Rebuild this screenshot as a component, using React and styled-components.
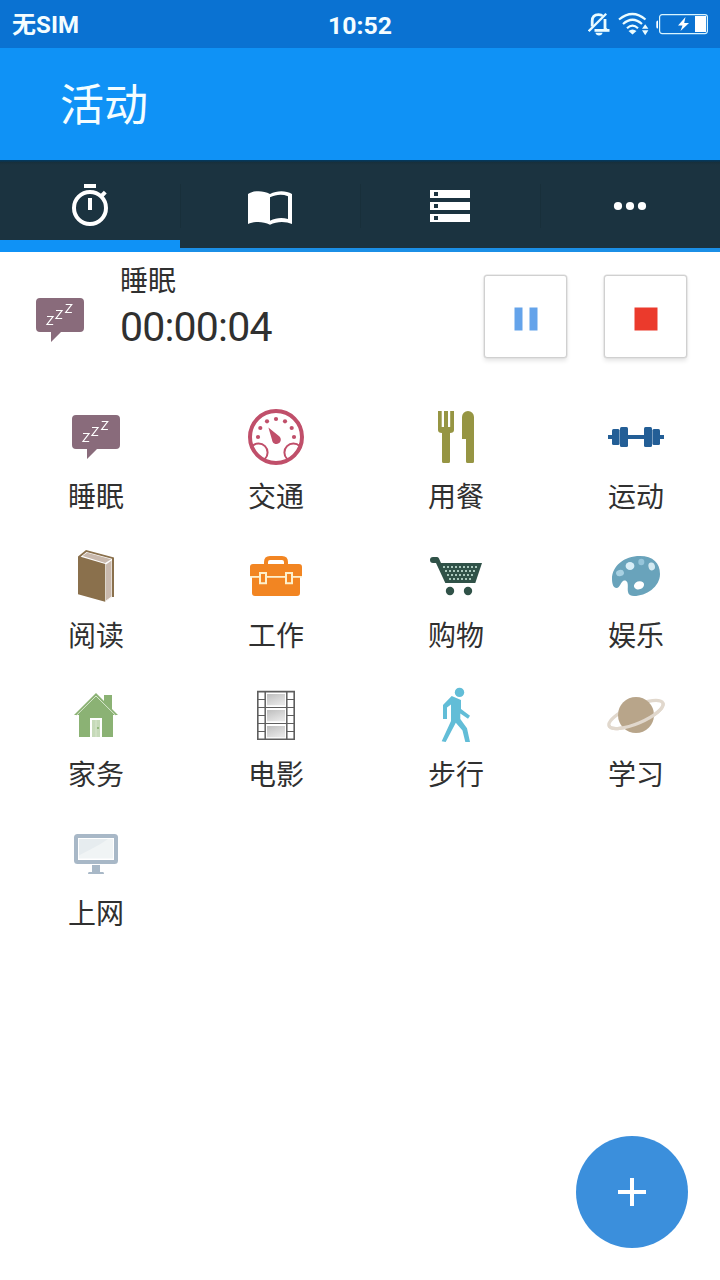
import React from 'react';
import styled, { createGlobalStyle } from 'styled-components';

const GlobalStyle = createGlobalStyle`
  * { box-sizing: border-box; }
  body {
    margin: 0;
    background: #fff;
    color: #303030;
    font-family: Roboto, "Noto Sans CJK SC", sans-serif;
  }
  button { font: inherit; color: inherit; border: 0; background: none; padding: 0; }
  svg { display: block; flex: none; }
`;

const Screen = styled.div`
  position: relative;
  width: 720px;
  height: 1280px;
  display: flex;
  flex-direction: column;
  overflow: hidden;
  background: #fff;
`;

const StatusBar = styled.div`
  height: 48px;
  flex: none;
  display: grid;
  grid-template-columns: 1fr auto 1fr;
  align-items: center;
  padding: 4px 12px 0 12px;
  background: #0a72d2;
  color: #f4fdff;
  font-size: 24.8px;
  font-weight: 700;
  line-height: 36px;
`;

const Carrier = styled.span`
  font-size: 24px;
  font-weight: 700;
  letter-spacing: 0.1px;
  padding-bottom: 2px;
`;

const StatusIcons = styled.div`
  display: flex;
  justify-content: flex-end;
  align-items: center;
  gap: 6px;
  padding-bottom: 4px;
`;

const AppBar = styled.header`
  height: 112px;
  flex: none;
  display: flex;
  align-items: center;
  padding: 4px 60px 0;
  background: #0f92f6;
  color: #f4fdff;
`;

const Title = styled.h1`
  margin: 0;
  font-size: 44px;
  font-weight: 400;
  line-height: 64px;
`;

const TabBar = styled.nav`
  height: 92px;
  flex: none;
  display: grid;
  grid-template-columns: repeat(4, 180px);
  background: #1b3340;
  background-image: linear-gradient(#04385c 0 1px, #172f3b 2px, #1b3340 5px);
`;

const Tab = styled.button`
  display: flex;
  justify-content: center;
  align-items: center;
  color: #fff;
  border-bottom: ${({ $active }) => ($active ? '12px solid #0f92f6' : '4px solid #1b8fe6')};
  padding-top: ${({ $active }) => ($active ? '12px' : '4px')};
  background: ${({ $divided }) =>
    $divided ? 'linear-gradient(#182f3a, #182f3a) 0 24px / 1px 44px no-repeat' : 'none'};
`;

const Timer = styled.section`
  height: 128px;
  flex: none;
  display: flex;
  align-items: flex-start;
  padding: 10px 33px 0 30px;
`;

const TimerIcon = styled.div`
  width: 90px;
  padding-top: 28px;
`;

const TimerText = styled.div`
  flex: 1;
  display: flex;
  flex-direction: column;
`;

const TimerName = styled.span`
  font-size: 28px;
  line-height: 40px;
`;

const TimerValue = styled.span`
  font-size: 41px;
  line-height: 50px;
  letter-spacing: -0.8px;
`;

const TimerActions = styled.div`
  display: flex;
  gap: 37px;
  padding-top: 13px;
`;

const ActionButton = styled.button`
  width: 83px;
  height: 83px;
  display: flex;
  align-items: center;
  justify-content: center;
  padding: 4px 0 0 1px;
  background: #fff;
  border: 1.5px solid #d0d0d0;
  border-radius: 3px;
  box-shadow: 0 0 0 0.5px #dcdcdc, 0 3px 4px rgba(0, 0, 0, 0.1);
`;

const ActivityGrid = styled.main`
  display: grid;
  grid-template-columns: repeat(4, 180px);
  grid-auto-rows: 139px;
  padding-top: 27px;
`;

const Activity = styled.button`
  display: flex;
  flex-direction: column;
  align-items: center;
  gap: 11px;
  padding-left: 12px;
`;

const ActivityLabel = styled.span`
  font-size: 28px;
  line-height: 40px;
  margin-bottom: -1px;
`;

const AddButton = styled.button`
  position: absolute;
  right: 32px;
  bottom: 32px;
  width: 112px;
  height: 112px;
  border-radius: 50%;
  display: flex;
  align-items: center;
  justify-content: center;
  background: #3b8fdc;
`;

const Icon = ({ children, size = 60, ...rest }) => (
  <svg width={size} height={size} viewBox={`0 0 ${size} ${size}`} {...rest}>
    {children}
  </svg>
);

const SleepIcon = () => (
  <Icon>
    <path fill="#896b7b" d="M10 8H50a4 4 0 0 1 4 4V38a4 4 0 0 1-4 4H31L21 52V42H10a4 4 0 0 1-4-4V12a4 4 0 0 1 4-4Z" />
    <g fill="none" stroke="#fff" strokeWidth="1.2">
      <path d="M17 26.500h6l-6 8h6.200" />
      <path d="M26 20.500h6l-6 8h6.200" />
      <path d="M35.700 14.500h6l-6 8h6.200" />
    </g>
  </Icon>
);

const gaugeDots = [[12, 30], [14.3, 21], [21, 14.3], [30, 12], [39, 14.3], [45.7, 21], [48, 30]];

const TrafficIcon = () => (
  <Icon>
    <clipPath id="dial"><circle cx="30" cy="30" r="26" /></clipPath>
    <g fill="none" stroke="#c04f6a" strokeWidth="2" clipPath="url(#dial)">
      <circle cx="12.6" cy="45.5" r="9" />
      <circle cx="47.4" cy="45.5" r="9" />
    </g>
    <circle cx="30" cy="30" r="26" fill="none" stroke="#c04f6a" strokeWidth="4" />
    {gaugeDots.map(([x, y]) => <circle key={x} cx={x} cy={y} r="2.1" fill="#c04f6a" />)}
    <path fill="#c04f6a" d="M22.400 20.600 32.600 28.800a4.400 4.400 0 1 1-6.600 4Z" />
  </Icon>
);

const DiningIcon = () => (
  <Icon fill="#969543">
    <path d="M12 4h3.700v16H18V4h4v16h2.200V4H28v19q0 3-4 3v28.500q0 1.500-1.500 1.500h-5q-1.500 0-1.500-1.500V26q-4 0-4-3Z" />
    <path d="M36 10a6 6 0 0 1 12 0v44.500q0 1.500-1.500 1.500h-5q-1.500 0-1.500-1.500V32h-4Z" />
  </Icon>
);

const SportIcon = () => (
  <Icon fill="#235e96">
    <path d="M2 28h5v4H2zM21 28h18v4H21zM53 28h5v4h-5z" />
    <rect x="6" y="22" width="7.600" height="16" rx="1.500" />
    <rect x="14" y="20" width="8" height="20" rx="1.500" />
    <rect x="38" y="20" width="8" height="20" rx="1.500" />
    <rect x="46.400" y="22" width="7.600" height="16" rx="1.500" />
  </Icon>
);

const ReadingIcon = () => (
  <Icon>
    <path fill="#8a704c" d="M12 10.500 20 4 48 11.500V51H46L39 55.700 12 48.300Z" />
    <path fill="#fff" d="M14.600 10.800 20.500 6 46 12.800V51.500L39.300 56V18Z" />
    <path fill="#c9b9ad" d="M16.500 10 21 6.700 45.300 13.200 39.200 16.900Z" />
    <path fill="#c9b9ad" d="M40 18.400 45.500 14.600V50.600L40 54.400Z" />
  </Icon>
);

const WorkIcon = () => (
  <Icon>
    <path fill="none" stroke="#f28522" strokeWidth="4" d="M20 19v-3q0-4 4-4h12q4 0 4 4v3" />
    <path fill="#f28522" d="M7 18H53q3 0 3 3V30H4V21q0-3 3-3ZM6 31.500H54V47q0 3-3 3H9q-3 0-3-3Z" />
    <path fill="#fdebbd" d="M4 30.200H56v1.300H4z" />
    <g fill="#f28522" stroke="#fdf0cc" strokeWidth="2">
      <path d="M14 27h6v10.300h-6zM40 27h6v10.300h-6z" />
    </g>
  </Icon>
);

const basketRows = [[18, 21, 9], [20, 25, 8], [22, 29, 7], [24, 33, 6]];

const ShoppingIcon = () => (
  <Icon fill="#305248">
    <path d="M7 11H11.200Q12.500 11 13 12.500L15 17H56L49.300 37H19.300L10 17H7A3 3 0 0 1 7 11Z" />
    <circle cx="24" cy="45" r="4.200" />
    <circle cx="42" cy="45" r="4.200" />
    <g fill="#a9c8bc">
      {basketRows.flatMap(([x, y, n]) =>
        Array.from({ length: n }, (_, i) => (
          <rect key={`${y}-${i}`} x={x - 1 + i * 4} y={y - 1} width="2" height="2" />
        ))
      )}
    </g>
  </Icon>
);

const LeisureIcon = () => (
  <Icon>
    <path
      fill="#69a3bb"
      d="M10.500 42C7.500 42 6 38 6 33 6 20 18 10 34 10 47 10 54 17 54 28 54 41 40 50 28 50 22 50 21.500 46 21.800 41 22.200 36 20.500 34 18 34.500 15 35 14 42 10.500 42Z"
    />
    <ellipse cx="14" cy="27" rx="4" ry="3.200" fill="#a8d1e2" transform="rotate(-15 14 27)" />
    <ellipse cx="24" cy="20" rx="4.400" ry="4" fill="#d9eef7" />
    <ellipse cx="35.300" cy="16" rx="3" ry="3.200" fill="#96c5da" />
    <ellipse cx="45.700" cy="20.400" rx="3.200" ry="4" fill="#d3e9f1" transform="rotate(-15 45.700 20.400)" />
    <ellipse cx="33" cy="39.300" rx="5.200" ry="4" fill="#fff" transform="rotate(-20 33 39.300)" />
  </Icon>
);

const HouseIcon = () => (
  <Icon>
    <path fill="#8bb274" d="M30 8 38 16V10H46V24L52 30H47V52H13V30H8Z" />
    <path fill="none" stroke="#d9e8cf" strokeWidth="1" d="M10.500 30.300 30 11 49.500 30.300" />
    <path fill="#fff" d="M24 33H36V52H24Z" />
    <path fill="#c6dab9" d="M26 35h8v17h-8z" />
    <path fill="#d7e5cd" d="M29.500 35h1v17h-1z" />
    <circle cx="32" cy="43" r="1.100" fill="#87b06f" />
  </Icon>
);

const MovieIcon = () => (
  <Icon>
    <linearGradient id="frame" x1="0" y1="0" x2="0.6" y2="1">
      <stop offset="0" stopColor="#bebebe" />
      <stop offset="1" stopColor="#e6e6e6" />
    </linearGradient>
    <g fill="none" stroke="#5e5e5e">
      <path strokeWidth="1.600" d="M11.800 6.600H48.200V54.200H11.800Z" />
      <path strokeWidth="1.500" d="M19.200 6V55M40.800 6V55" />
      <path strokeWidth="1" d="M11 22.500H49M11 38.500H49" />
      <path strokeWidth="1" d="M11 14.500h8M11 30.500h8M11 46.500h8M41 14.500h8M41 30.500h8M41 46.500h8" />
    </g>
    <g fill="url(#frame)">
      <rect x="21" y="9" width="18" height="11.300" />
      <rect x="21" y="25" width="18" height="11.300" />
      <rect x="21" y="41" width="18" height="11.300" />
    </g>
  </Icon>
);

const WalkIcon = () => (
  <Icon fill="#62bdd7">
    <circle cx="33.500" cy="7.400" r="4.700" />
    <path d="M25.700 11 35 15V24L44 30.700 42 33.700 34.300 28.500V34L41 43.300 44 57H39.300L36.500 45.500 29.800 37.700 19.700 57 15.700 56.300 25 36V19.500L21 22.500V34H17V20Z" />
  </Icon>
);

const StudyIcon = () => (
  <Icon>
    <ellipse cx="30" cy="29.500" rx="29.200" ry="9" fill="none" stroke="#e1d8cd" strokeWidth="3.300" transform="rotate(-23 30 29.500)" />
    <circle cx="30" cy="30" r="18" fill="#b8a58a" />
    <path
      d="M.8 29.500A29.200 9 0 0 0 59.200 29.500"
      fill="none" stroke="#e1d8cd" strokeWidth="3.300" transform="rotate(-23 30 29.500)"
    />
  </Icon>
);

const InternetIcon = () => (
  <Icon>
    <rect x="8" y="10" width="44" height="30" rx="3.500" fill="#a8b8c7" />
    <path fill="#fff" d="M12 14H48V36H12z" />
    <path fill="#f0f4f5" d="M13 15H47V34.500H13z" />
    <path fill="#e6ecef" d="M13 15H42Q35 20 29 23T13 31.500Z" />
    <path fill="#a8b8c7" d="M26 41h8v7h3q1 0 1 2H22q0-2 1-2h3Z" />
  </Icon>
);

const StopwatchIcon = () => (
  <Icon size={48} fill="none" stroke="currentColor" strokeWidth="4">
    <path d="M18 4H30M24 16V28" />
    <path d="M34.500 15 39.300 10.200" />
    <circle cx="24" cy="26" r="16" />
  </Icon>
);

const BookIcon = () => (
  <Icon size={48} fill="currentColor">
    <path
      fillRule="evenodd"
      d="M2 12C8 8.200 17 8.200 24 12 31 8.200 40 8.200 46 12V42C40 39.200 31 39 24 42.800 17 39 8 39.200 2 42ZM24 15.300V38.800C30 35.800 36 35.500 42 37V14.300C36 11.800 30 12.500 24 15.300Z"
    />
  </Icon>
);

const ListIcon = () => (
  <Icon size={48} fill="currentColor">
    <path fillRule="evenodd" d="M4 8H44v8H4zM8 10v4h4v-4zM4 20H44v8H4zM8 22v4h4v-4zM4 32H44v8H4zM8 34v4h4v-4z" />
  </Icon>
);

const MoreIcon = () => (
  <Icon size={48} fill="currentColor">
    <circle cx="12" cy="24" r="4.100" />
    <circle cx="24" cy="24" r="4.100" />
    <circle cx="36" cy="24" r="4.100" />
  </Icon>
);

const MutedIcon = () => (
  <svg width="24" height="24" viewBox="0 0 24 24" fill="none" stroke="#eafcff" strokeWidth="2.800">
    <path d="M4.200 14.500V9Q4.200 2.600 10.500 2.600 13.500 2.600 14.500 4M17 7V16.500L19 18.500" />
    <path d="M6.500 18.400H21.500" />
    <path strokeWidth="2.300" d="M.7 19.300 18.200 1.800" />
    <path fill="#eafcff" stroke="none" d="M7.500 20.800h7Q14 23.500 11 23.500T7.500 20.800Z" />
  </svg>
);

const WifiIcon = () => (
  <svg width="32" height="24" viewBox="0 0 32 24" fill="none" stroke="#eafcff" strokeWidth="2.200">
    <path d="M1 7.500Q14.500-3.500 27.500 7.500M5 12Q14.500 3.500 24 12M9 16.200Q14.500 11.200 20 16.200" />
    <path fill="#eafcff" stroke="none" d="M10.500 19Q14.500 16 18.500 19L14.500 22.500ZM24 16.700 27.200 12.300 30.400 16.700ZM24 18.300H30.400L27.200 23.300Z" />
  </svg>
);

const BatteryIcon = () => (
  <svg width="52" height="24" viewBox="0 0 52 24" fill="#fff">
    <rect x="3.600" y="2.600" width="47.800" height="19" rx="2.500" fill="none" stroke="#d9f5ff" strokeWidth="1.200" />
    <path d="M2 8.500Q.3 8.500.3 10v5q0 1.500 1.700 1.500Z" />
    <path d="M39 4h11v16H39zM29.500 5 22 13.500H26.500L24.500 19 33 11H28.200Z" />
  </svg>
);

const PauseIcon = () => (
  <Icon size={24} fill="#64a3ea">
    <path d="M.5.5h8v23h-8zM15.500.5h8v23h-8z" />
  </Icon>
);

const StopIcon = () => (
  <Icon size={24}>
    <rect x=".5" y=".5" width="23" height="23" fill="#eb3a2c" />
  </Icon>
);

const PlusIcon = () => (
  <Icon size={28} stroke="#fff" strokeWidth="4">
    <path d="M14 0V28M0 14H28" />
  </Icon>
);

const tabs = [
  { name: 'timer', Glyph: StopwatchIcon },
  { name: 'journal', Glyph: BookIcon },
  { name: 'list', Glyph: ListIcon },
  { name: 'more', Glyph: MoreIcon },
];

const activities = [
  ['睡眠', SleepIcon],
  ['交通', TrafficIcon],
  ['用餐', DiningIcon],
  ['运动', SportIcon],
  ['阅读', ReadingIcon],
  ['工作', WorkIcon],
  ['购物', ShoppingIcon],
  ['娱乐', LeisureIcon],
  ['家务', HouseIcon],
  ['电影', MovieIcon],
  ['步行', WalkIcon],
  ['学习', StudyIcon],
  ['上网', InternetIcon],
];

export default function App() {
  return (
    <Screen>
      <GlobalStyle />
      <StatusBar>
        <Carrier>无SIM</Carrier>
        <span>10:52</span>
        <StatusIcons>
          <MutedIcon />
          <WifiIcon />
          <BatteryIcon />
        </StatusIcons>
      </StatusBar>
      <AppBar>
        <Title>活动</Title>
      </AppBar>
      <TabBar>
        {tabs.map(({ name, Glyph }, i) => (
          <Tab key={name} $active={i === 0} $divided={i > 0}>
            <Glyph />
          </Tab>
        ))}
      </TabBar>
      <Timer>
        <TimerIcon><SleepIcon /></TimerIcon>
        <TimerText>
          <TimerName>睡眠</TimerName>
          <TimerValue>00:00:04</TimerValue>
        </TimerText>
        <TimerActions>
          <ActionButton><PauseIcon /></ActionButton>
          <ActionButton><StopIcon /></ActionButton>
        </TimerActions>
      </Timer>
      <ActivityGrid>
        {activities.map(([label, Glyph]) => (
          <Activity key={label}>
            <Glyph />
            <ActivityLabel>{label}</ActivityLabel>
          </Activity>
        ))}
      </ActivityGrid>
      <AddButton><PlusIcon /></AddButton>
    </Screen>
  );
}
